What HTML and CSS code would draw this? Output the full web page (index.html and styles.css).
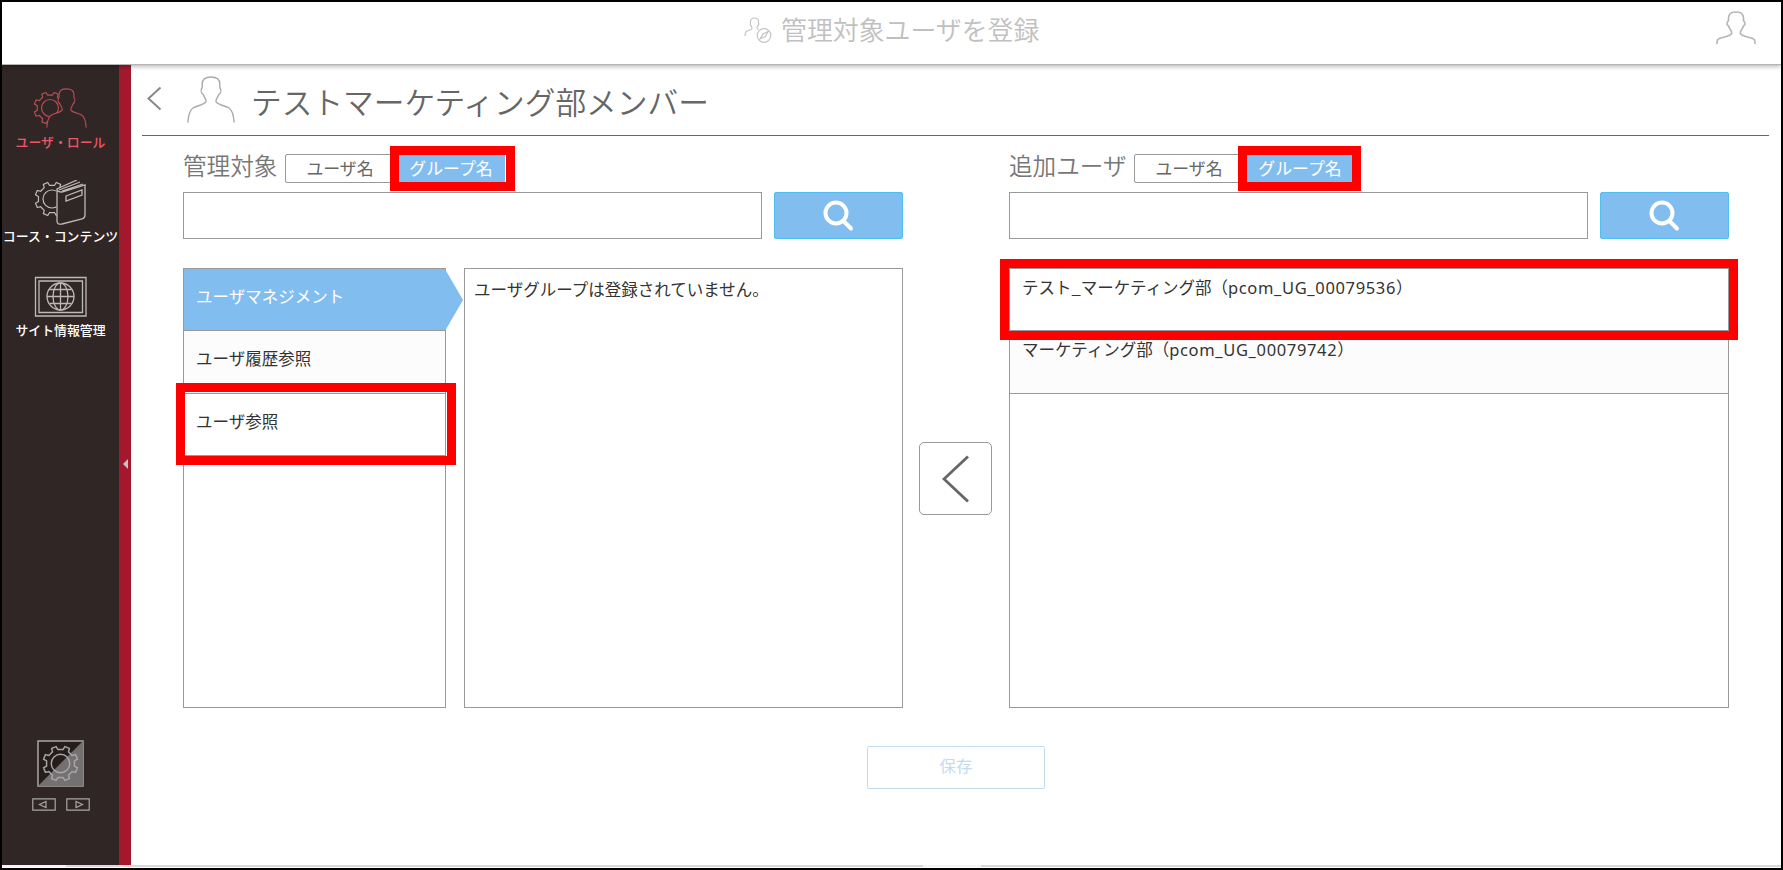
FILE: index.html
```html
<!DOCTYPE html>
<html lang="ja">
<head>
    <meta charset="UTF-8">
    <title>管理対象ユーザを登録</title>
    <link rel="stylesheet" href="styles.css">
</head>
<body>
<svg class="defs">
    <symbol id="gear" viewBox="-19 -19 38 38">
        <path d="M14.3 2.6L17.4 4.5L15.5 9.1L12 8.2L8.2 12L9.1 15.5L4.5 17.4L2.6 14.3H-2.6L-4.5 17.4L-9.1 15.5L-8.2 12L-12 8.2L-15.5 9.1L-17.4 4.5L-14.3 2.6V-2.6L-17.4 -4.5L-15.5 -9.1L-12 -8.2L-8.2 -12L-9.1 -15.5L-4.5 -17.4L-2.6 -14.3H2.6L4.5 -17.4L9.1 -15.5L8.2 -12L12 -8.2L15.5 -9.1L17.4 -4.5L14.3 -2.6Z"/>
        <circle r="9.5"/>
    </symbol>
    <symbol id="person" viewBox="0 0 48 47">
        <path d="M.8 46.5C1.5 39 2.5 34 6 32C10 29.7 18 28.5 19 25.5C19.6 23.500 17 21 16.200 18.500C14 17 13.500 14 15.200 11.500V8C15.200 3 18.500 1 24 1S32.800 3 32.800 8V11.500C34.500 14 34 17 31.800 18.500C31 21 28.400 23.500 29 25.500C30 28.500 38 29.700 42 32C45.500 34 46.500 39 47.200 46.500"/>
    </symbol>
    <symbol id="search" viewBox="0 0 32 32">
        <circle cx="13" cy="13" r="10.500"/>
        <path d="M20.500 21L28 28.500"/>
    </symbol>
</svg>
<div class="page">
    <header class="header">
        <svg class="header-icon" viewBox="0 0 28 27">
            <path d="M1 19C1 14 3 14 6 13C8 12.300 8.500 11.500 7.500 9.500C5.500 7.500 6 6.500 6.500 5C6.500 2 8 1 10.500 1S14.500 2 14.500 5C15 6.500 15 8 13.500 9.500C12.500 11 13 12 14.500 12.500"/>
            <circle cx="20" cy="18.500" r="6.800"/>
            <path d="M16 22L19 17L24 14.500L21.500 19.500Z"/>
        </svg>
        <h1>管理対象ユーザを登録</h1>
        <svg class="header-user" viewBox="0 0 40 34">
            <path d="M1 33V31C1 26 7 27.500 13 24.500C16 23 16.500 22 15 19.500C13.500 17.500 13 16.500 12.500 15C10.500 13.500 10.500 12 12.500 9.500V7C12.500 3 15 1 20 1S27.500 3 27.500 7V9.500C29.500 12 29.500 13.500 27.500 15C27 16.500 26.500 17.500 25 19.500C23.500 22 24 23 27 24.500C33 27.500 39 26 39 31V33"/>
        </svg>
    </header>
    <div class="body">
        <nav class="side">
            <a class="side-item active">
                <svg class="side-icon" viewBox="0 0 54 46">
                    <use href="#gear" x="0" y="5" width="34" height="34"/>
                    <use class="cover" href="#person" x="13" y="2" width="41" height="40"/>
                </svg>
                <span>ユーザ・ロール</span>
            </a>
            <a class="side-item">
                <svg class="side-icon" viewBox="0 0 54 46">
                    <use href="#gear" x="0" y="1" width="36" height="36"/>
                    <path class="cover" d="M22 9L43 0L50 2V37Q50 40 47 41L28 45Q23 45 23 41Z" stroke="none"/>
                    <path d="M23 9V41Q23 45 28 44L48 39Q51 38 51 35V5L28 12Q23 12 23 9L43 0M25 10L46 2M28 11L49 4M32 16L48 10V15L32 21Z"/>
                </svg>
                <span>コース・コンテンツ</span>
            </a>
            <a class="side-item">
                <svg class="side-icon" viewBox="0 0 54 46">
                    <path d="M2.500 3.500H53V42H2.500ZM6 7H49.500V38.500H6Z"/>
                    <circle cx="27.500" cy="22.500" r="13.500"/>
                    <ellipse cx="27.500" cy="22.500" rx="7.500" ry="13.500"/>
                    <path d="M27.500 9V36M14 22.500H41M16.500 15.500H38.500M16.500 29.500H38.500"/>
                </svg>
                <span>サイト情報管理</span>
            </a>
            <div class="side-bottom">
                <svg class="theme" viewBox="0 0 47 47">
                    <path class="theme-bg" d="M1 1H46V46H1Z"/>
                    <path class="theme-half" d="M46 1V46H1Z"/>
                    <use href="#gear" x="5" y="5" width="37" height="37"/>
                </svg>
                <div class="pager">
                    <svg viewBox="0 0 24 13"><path d="M.8 .8H23.200V12.200H.8ZM14 3.500V9.500L7.500 6.500Z"/></svg>
                    <svg viewBox="0 0 24 13"><path d="M.8 .8H23.200V12.200H.8ZM10 3.500V9.500L16.500 6.500Z"/></svg>
                </div>
            </div>
        </nav>
        <div class="side-bar"><i class="side-toggle"></i></div>
        <main class="main">
            <div class="title">
                <svg class="back" viewBox="0 0 15 25"><path d="M13.500 1.500L1.500 12.500L13.500 23.500"/></svg>
                <svg class="title-icon" viewBox="0 0 48 47"><use href="#person"/></svg>
                <h2>テストマーケティング部メンバー</h2>
            </div>
            <div class="columns">
                <section class="column">
                    <div class="column-head">
                        <span class="label">管理対象</span>
                        <span class="tab">ユーザ名</span>
                        <span class="tab on">グループ名<i class="mark mark-tab"></i></span>
                    </div>
                    <div class="search">
                        <input type="text">
                        <button><svg><use href="#search"/></svg></button>
                    </div>
                    <div class="panels">
                        <ul class="roles">
                            <li class="selected">ユーザマネジメント</li>
                            <li class="even">ユーザ履歴参照</li>
                            <li>ユーザ参照<i class="mark mark-role"></i></li>
                        </ul>
                        <div class="groups">ユーザグループは登録されていません。</div>
                    </div>
                </section>
                <div class="move">
                    <button><svg viewBox="0 0 28 48"><path d="M26 1.500L2 24L26 46.500"/></svg></button>
                </div>
                <section class="column">
                    <div class="column-head">
                        <span class="label label-add">追加ユーザ</span>
                        <span class="tab">ユーザ名</span>
                        <span class="tab on">グループ名<i class="mark mark-tab mark-tab-add"></i></span>
                    </div>
                    <div class="search">
                        <input type="text">
                        <button><svg><use href="#search"/></svg></button>
                    </div>
                    <ul class="candidates">
                        <li>テスト_マーケティング部（<span class="code">pcom_UG_00079536</span>）<i class="mark mark-group"></i></li>
                        <li class="even">マーケティング部（<span class="code">pcom_UG_00079742</span>）</li>
                    </ul>
                </section>
            </div>
            <button class="save">保存</button>
        </main>
    </div>
    <div class="scroll"><i class="thumb thumb-side"></i><i class="thumb thumb-main"></i></div>
</div>
</body>
</html>
```
FILE: styles.css
```css
* {
    margin: 0;
    padding: 0;
    box-sizing: border-box;
    list-style: none;
}
body {
    font-family: "Noto Sans CJK JP", sans-serif;
    font-size: 16.5px;
    color: #333;
    background: #fff;
}
svg {
    display: block;
    fill: none;
    stroke: currentColor;
}
button {
    background: #fff;
    font-family: inherit;
}
.defs {
    position: absolute;
    width: 0;
    height: 0;
}
.page {
    width: 1783px;
    height: 870px;
    border: 2px solid #000;
    display: flex;
    flex-direction: column;
    overflow: hidden;
}

/* header */
.header {
    position: relative;
    z-index: 1;
    height: 63px;
    flex: none;
    display: flex;
    align-items: center;
    padding: 0 25px 5px 742px;
    border-bottom: 1px solid #b5b5b5;
    box-shadow: 0 1px 5px rgba(0, 0, 0, .35);
    background: #fff;
    color: #c4c4c4;
}
.header h1 {
    font-size: 25.9px;
    line-height: 40px;
    font-weight: 350;
    margin: -3px 0 0 9px;
    color: #c0c0c0;
}
.header-icon {
    width: 28px;
    height: 27px;
    stroke-width: 1.2;
}
.header-user {
    width: 40px;
    height: 34px;
    margin: 0 0 6px auto;
    stroke-width: 1.6;
    color: #b5b5b5;
}

/* sidebar */
.body {
    display: flex;
    height: 800px;
    flex: none;
}
.side {
    width: 117px;
    background: #302626;
    color: #fff;
    display: flex;
    flex-direction: column;
    align-items: center;
    padding-top: 21px;
}
.side-item {
    height: 94px;
    display: flex;
    flex-direction: column;
    align-items: center;
    font-size: 12.9px;
    line-height: 20px;
    font-weight: 500;
    white-space: nowrap;
}
.side-icon {
    width: 54px;
    height: 46px;
    color: #bdb9b9;
    stroke-width: 1.3;
}
.side-item.active {
    color: #ef5763;
}
.side-item.active .side-icon {
    color: #b84d55;
}
.cover {
    fill: #302626;
}
.side-bottom {
    margin-top: auto;
    padding-bottom: 54px;
    color: #aaa5a5;
}
.theme {
    width: 47px;
    height: 47px;
    margin: 0 auto 11px;
    stroke-width: 1.5;
}
.theme-bg {
    fill: #241d1b;
}
.theme-half {
    fill: #747173;
    stroke: none;
}
.pager {
    display: flex;
    gap: 10px;
}
.pager svg {
    width: 24px;
    height: 13px;
    stroke-width: 1.2;
}
.side-bar {
    width: 12px;
    background: #a3182c;
    display: flex;
    align-items: center;
    justify-content: center;
}
.side-toggle {
    border: 5px solid transparent;
    border-right: 5px solid #c8bfc0;
    border-left: 0;
    margin-bottom: 2px;
}

/* main */
.main {
    flex: 1;
    padding-left: 11px;
    padding-right: 12px;
}
.title {
    height: 71px;
    border-bottom: 1px solid #666;
    display: flex;
    padding: 11px 0 0 5px;
    color: #666;
}
.title h2 {
    font-size: 30.7px;
    line-height: 48px;
    font-weight: 350;
    margin: 1px 0 0 16px;
}
.back {
    width: 15px;
    height: 25px;
    margin: 10px 25px 0 0;
    stroke-width: 2;
    color: #888;
}
.title-icon {
    width: 48px;
    height: 47px;
    stroke-width: 1.4;
    color: #aaa;
}
.columns {
    display: flex;
    padding-left: 41px;
}
.column {
    width: 720px;
}
.column-head {
    display: flex;
    height: 29px;
    margin: 18px 0 9px;
}
.label {
    width: 102px;
    font-size: 23.6px;
    line-height: 22px;
    font-weight: 350;
    color: #777;
    white-space: nowrap;
}
.label-add {
    width: 125px;
}
.tab {
    position: relative;
    width: 110px;
    border: 1px solid #999;
    border-radius: 2px;
    font-size: 16.9px;
    line-height: 25px;
    text-align: center;
    color: #666;
}
.tab.on {
    border-color: #82bdf0;
    background: #82bdf0;
    color: #fff;
    padding-left: 2px;
}
.search {
    display: flex;
    justify-content: space-between;
    height: 47px;
    margin-bottom: 29px;
}
.search input {
    width: 579px;
    border: 1px solid #999;
}
.search button {
    width: 129px;
    border: 1px solid #4dbff2;
    border-radius: 2px;
    background: #82bdf0;
    color: #fff;
}
.search svg {
    width: 32px;
    height: 32px;
    margin: 0 auto;
    stroke-width: 4;
    stroke-linecap: round;
}
.panels {
    display: flex;
    justify-content: space-between;
}
.roles,
.groups,
.candidates {
    height: 440px;
    border: 1px solid #999;
}
.roles {
    width: 263px;
}
.roles li,
.candidates li {
    position: relative;
    height: 62.3px;
    border-bottom: 1px solid #999;
    padding-left: 12px;
    line-height: 54px;
}
.roles .even,
.candidates .even {
    background: #fcfcfc;
}
.roles .selected {
    background: #82bdf0;
    color: #fff;
}
/* arrow head of the selected role */
.roles .selected::after {
    content: "";
    position: absolute;
    left: 261px;
    top: 0;
    border: 31px solid transparent;
    border-left: 18px solid #82bdf0;
    border-right: 0;
}
.groups {
    width: 439px;
    padding: 6px 9px;
    line-height: 28px;
}
.candidates li {
    line-height: 37px;
}
.code {
    font-family: "Noto Sans", sans-serif;
    line-height: 1;
    letter-spacing: .65px;
}
.move {
    width: 106px;
    padding: 306px 0 0 16px;
}
.move button {
    width: 73px;
    height: 73px;
    border: 1px solid #999;
    border-radius: 5px;
}
.move svg {
    width: 28px;
    height: 48px;
    margin: 0 auto;
    stroke-width: 2.8;
    color: #666;
}
.save {
    display: block;
    width: 178px;
    height: 43px;
    margin: 38px 0 0 725px;
    border: 1px solid #c3dcf2;
    border-radius: 2px;
    font-size: 16.4px;
    line-height: 36px;
    padding-bottom: 5px;
    color: #c3dcf2;
}
.scroll {
    height: 2px;
    display: flex;
    background: #d9d9d9;
}
.thumb {
    background: #f4f4f4;
}
.thumb-side {
    width: 64px;
}
.thumb-main {
    width: 58px;
    margin-left: 857px;
}

/* red frames */
.mark {
    position: absolute;
    z-index: 2;
    border: 9px solid #f00;
}
.mark-tab {
    left: -6px;
    top: -9px;
    width: 125px;
    height: 45px;
}
.mark-tab-add {
    left: -7px;
    width: 123px;
}
.mark-role {
    left: -8px;
    top: -11px;
    width: 280px;
    height: 82px;
}
.mark-group {
    left: -10px;
    top: -10px;
    width: 738px;
    height: 81px;
}
```
